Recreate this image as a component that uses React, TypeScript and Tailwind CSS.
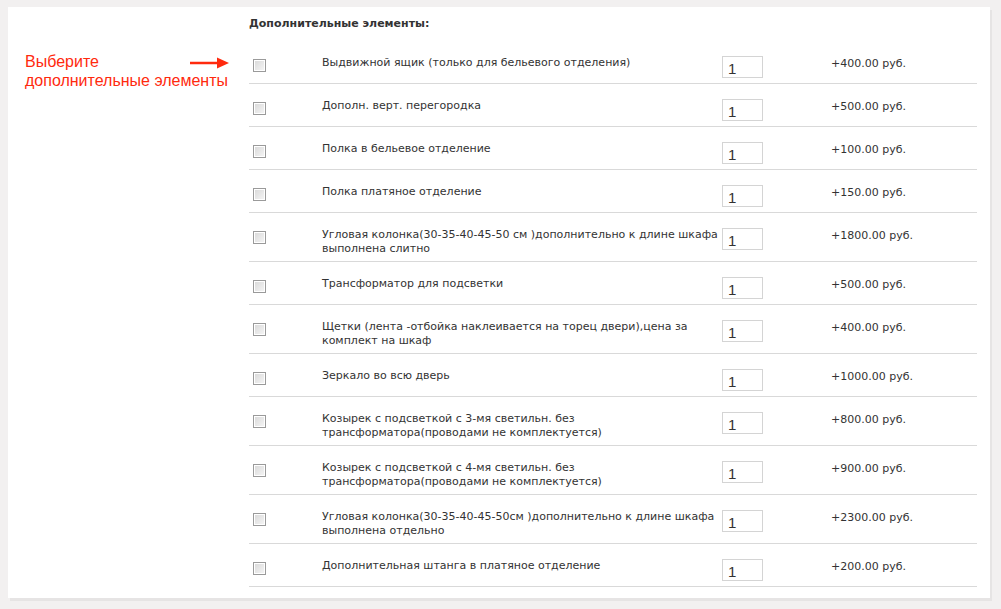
import React from 'react'

const items = [
  { name: 'Выдвижной ящик (только для бельевого отделения)', price: '+400.00 руб.' },
  { name: 'Дополн. верт. перегородка', price: '+500.00 руб.' },
  { name: 'Полка в бельевое отделение', price: '+100.00 руб.' },
  { name: 'Полка платяное отделение', price: '+150.00 руб.' },
  { name: 'Угловая колонка(30-35-40-45-50 см )дополнительно к длине шкафа выполнена слитно', price: '+1800.00 руб.' },
  { name: 'Трансформатор для подсветки', price: '+500.00 руб.' },
  { name: 'Щетки (лента -отбойка наклеивается на торец двери),цена за комплект на шкаф', price: '+400.00 руб.' },
  { name: 'Зеркало во всю дверь', price: '+1000.00 руб.' },
  { name: 'Козырек с подсветкой с 3-мя светильн. без трансформатора(проводами не комплектуется)', price: '+800.00 руб.' },
  { name: 'Козырек с подсветкой с 4-мя светильн. без трансформатора(проводами не комплектуется)', price: '+900.00 руб.' },
  { name: 'Угловая колонка(30-35-40-45-50см )дополнительно к длине шкафа выполнена отдельно', price: '+2300.00 руб.' },
  { name: 'Дополнительная штанга в платяное отделение', price: '+200.00 руб.' },
]

function Checkbox() {
  return (
    <span className="block w-[13px] h-[13px] border border-[#9a9a9a] bg-gradient-to-br from-[#d8d8d8] to-[#f6f6f6] shadow-[inset_0_0_0_1px_#fff]" />
  )
}

export default function App() {
  return (
    <div className="w-[1001px] h-[609px] bg-[#f2f0f0] pt-[7px] pl-[8px] font-['DejaVu_Sans',sans-serif] text-[#333]">
      <div className="w-[982px] h-[591px] bg-white flex shadow-[2px_3px_0_#e6e4e4]">
        <div className="w-[241px] shrink-0 pt-[45px] pl-[17px] relative">
          <p className="font-['Liberation_Sans',sans-serif] text-[16px] leading-[19px] text-[#ff2a0e]">
            Выберите
            <br />
            дополнительные элементы
          </p>
          <svg className="absolute left-[182px] top-[50px]" width="40" height="12" viewBox="0 0 40 12">
            <line x1="0" y1="6" x2="30" y2="6" stroke="#ff2a0e" strokeWidth="2.5" />
            <polygon points="27,0.5 39,6 27,11.5" fill="#ff2a0e" />
          </svg>
        </div>
        <div className="w-[728px] shrink-0">
          <h2 className="pt-[9px] h-[34px] text-[11px] font-bold text-[#333]">Дополнительные элементы:</h2>
          {items.map((item, i) => (
            <div key={i} className="flex items-start border-b border-[#d9d9d9] pt-[15px] pb-[5px]">
              <div className="w-[73px] pl-[4px] pt-[3px] shrink-0">
                <Checkbox />
              </div>
              <div className="w-[400px] shrink-0 text-[11px] leading-[14px]">{item.name}</div>
              <div className="w-[109px] shrink-0">
                <div className="w-[41px] h-[22px] border border-[#d4d4d4] font-['Liberation_Sans',sans-serif] text-[15px] leading-[20px] pl-[5px] pt-[2px] text-[#333]">1</div>
              </div>
              <div className="text-[11px] leading-[14px] pt-[1px]">{item.price}</div>
            </div>
          ))}
        </div>
      </div>
    </div>
  )
}
